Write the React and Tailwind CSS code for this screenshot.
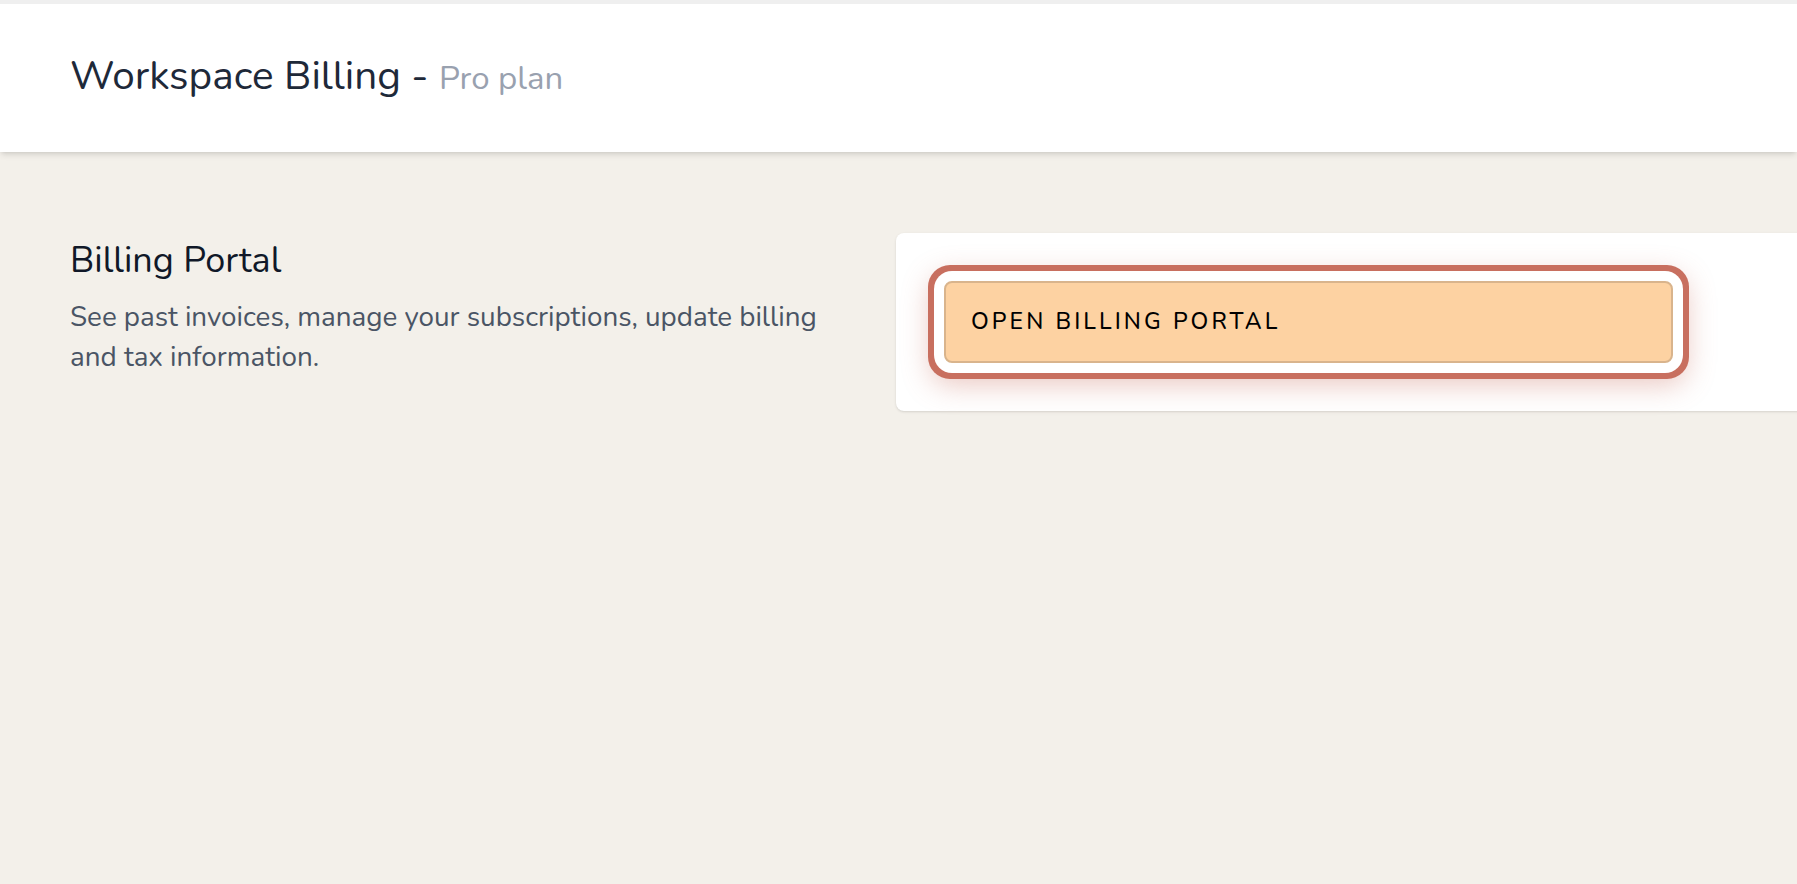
export default function App() {
  return (
    <div className="min-h-screen w-full overflow-hidden bg-[#f3f0ea] font-['Nunito','Lato',sans-serif]">
      {/* Page header */}
      <header className="relative z-10 flex h-[152px] items-center border-t-[4px] border-[#efefef] bg-white px-[70px] pb-[3px] shadow-md">
        <h1 className="text-[40.5px] text-gray-800">
          Workspace Billing - <span className="text-[33px] text-gray-400">Pro plan</span>
        </h1>
      </header>

      <main className="flex items-start pt-[81px] pl-[70px]">
        {/* Section description */}
        <div className="w-[826px] shrink-0 pt-[8px]">
          <h2 className="text-[36px] leading-[40px] text-gray-900">Billing Portal</h2>
          <p className="mt-[16px] max-w-[780px] text-[27.8px] leading-[40px] text-gray-600">
            See past invoices, manage your subscriptions, update billing and tax information.
          </p>
        </div>

        {/* Card */}
        <div className="w-[1000px] shrink-0 rounded-lg bg-white p-12 shadow-sm">
          <button className="h-[82px] w-[729px] rounded-lg border-2 border-[#d9b48c] bg-[#fdd2a2] px-[25px] text-left text-[23px] font-medium tracking-[0.135em] text-black shadow-[0_8px_28px_14px_rgba(200,111,95,0.38)] ring-[6px] ring-[#c86f5f] ring-offset-[10px] ring-offset-white">
            OPEN BILLING PORTAL
          </button>
        </div>
      </main>
    </div>
  );
}
